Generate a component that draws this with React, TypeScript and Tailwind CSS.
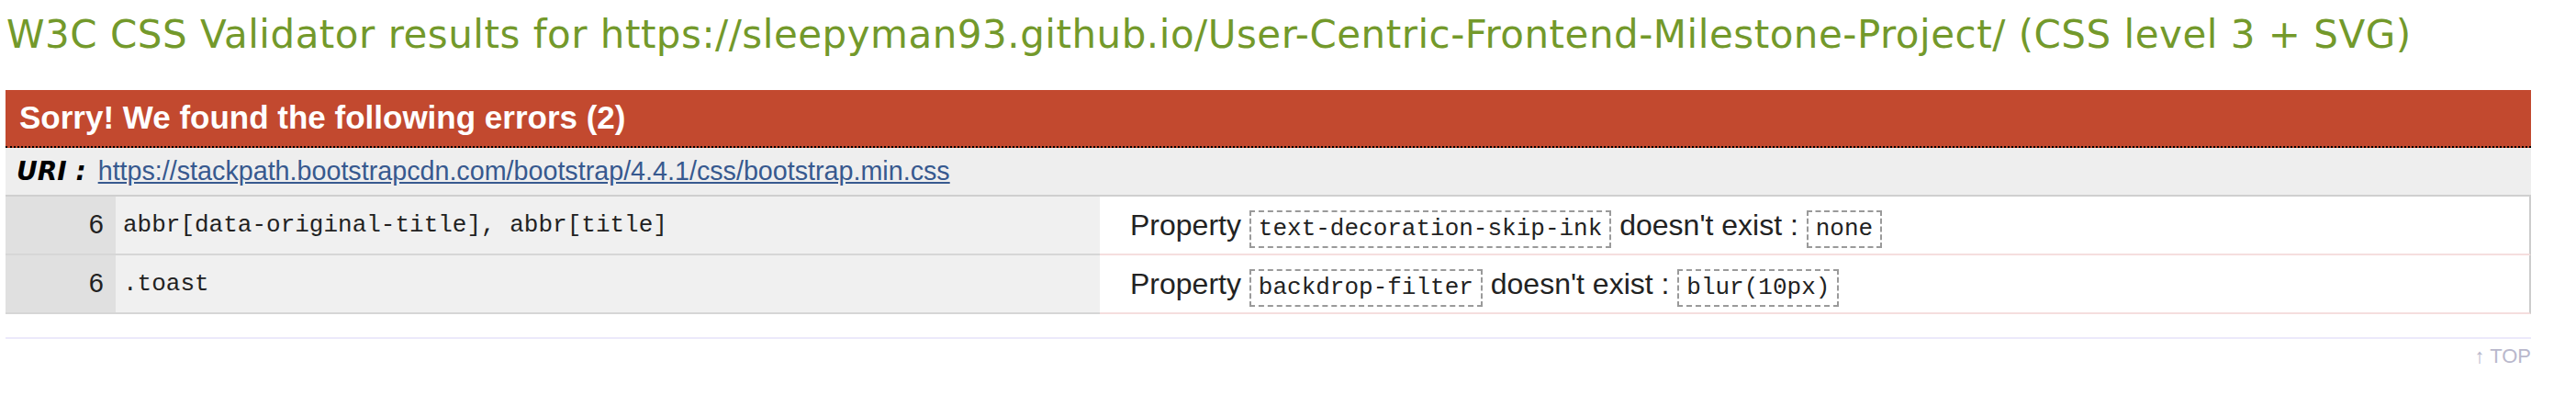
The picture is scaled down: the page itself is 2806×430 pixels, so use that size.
import React from 'react';

type ErrorRow = {
  line: number;
  selector: string;
  property: string;
  value: string;
};

const errors: ErrorRow[] = [
  { line: 6, selector: 'abbr[data-original-title], abbr[title]', property: 'text-decoration-skip-ink', value: 'none' },
  { line: 6, selector: '.toast', property: 'backdrop-filter', value: 'blur(10px)' },
];

const Code: React.FC<{ children: React.ReactNode }> = ({ children }) => (
  <span className="inline-flex items-center h-[41px] px-[8px] border-2 border-dashed border-[#9a9a9a] font-['Liberation_Mono',monospace] text-[26px] text-[#222]">
    {children}
  </span>
);

export default function App() {
  return (
    <div className="w-[2806px] h-[430px] bg-white overflow-hidden">
      <h2 className="pt-[13px] pl-[7px] text-[42px] leading-[49px] tracking-[0.5px] text-[#73992b] font-['DejaVu_Sans',sans-serif] whitespace-nowrap">
        W3C CSS Validator results for https://sleepyman93.github.io/User-Centric-Frontend-Milestone-Project/ (CSS level 3 + SVG)
      </h2>

      <div className="ml-[6px] mt-[36px] w-[2751px]">
        {/* error header */}
        <div className="h-[63px] bg-[#c2492f] border-b-2 border-dotted border-black flex items-center pl-[15px]">
          <h4 className="text-white font-bold text-[35px] font-['Liberation_Sans',Arial,sans-serif] whitespace-nowrap">
            Sorry! We found the following errors (2)
          </h4>
        </div>

        {/* uri row */}
        <div className="h-[53px] bg-[#eeeeee] border-b-2 border-[#cfcfcf] flex items-center pl-[12px] whitespace-nowrap">
          <span className="font-['DejaVu_Sans',sans-serif] font-bold italic text-[28px] text-black">URI :</span>
          <a
            href="#"
            className="ml-[13px] font-['Liberation_Sans',Arial,sans-serif] text-[28.7px] text-[#37598f] underline"
          >
            https://stackpath.bootstrapcdn.com/bootstrap/4.4.1/css/bootstrap.min.css
          </a>
        </div>

        {/* error rows */}
        {errors.map((e, idx) => (
          <div key={idx} className="flex h-[64px]">
            <div className="w-[120px] bg-[#e0e0e0] border-b-2 border-[#d6d6d6] flex items-center justify-end pr-[13px] font-['Liberation_Sans',Arial,sans-serif] text-[29px] text-[#222]">
              {e.line}
            </div>
            <div className="w-[1072px] bg-[#f0f0f0] border-b-2 border-[#d6d6d6] flex items-center pl-[8px] font-['Liberation_Mono',monospace] text-[26px] text-[#222] whitespace-nowrap">
              {e.selector}
            </div>
            <div className="flex-1 bg-white border-b-2 border-r-2 border-b-[#f5dede] border-r-[#cccccc] flex items-center pl-[33px] font-['Liberation_Sans',Arial,sans-serif] text-[32px] text-[#222] whitespace-nowrap">
              <div className="leading-normal">
                Property <Code>{e.property}</Code> doesn't exist : <Code>{e.value}</Code>
              </div>
            </div>
          </div>
        ))}

        <div className="mt-[25px] h-[2px] bg-[#ece9fb]" />
        <div className="mt-[2px] text-right text-[22px] text-[#b9b8cc] font-['Liberation_Sans',Arial,sans-serif]">
          ↑ TOP
        </div>
      </div>
    </div>
  );
}
